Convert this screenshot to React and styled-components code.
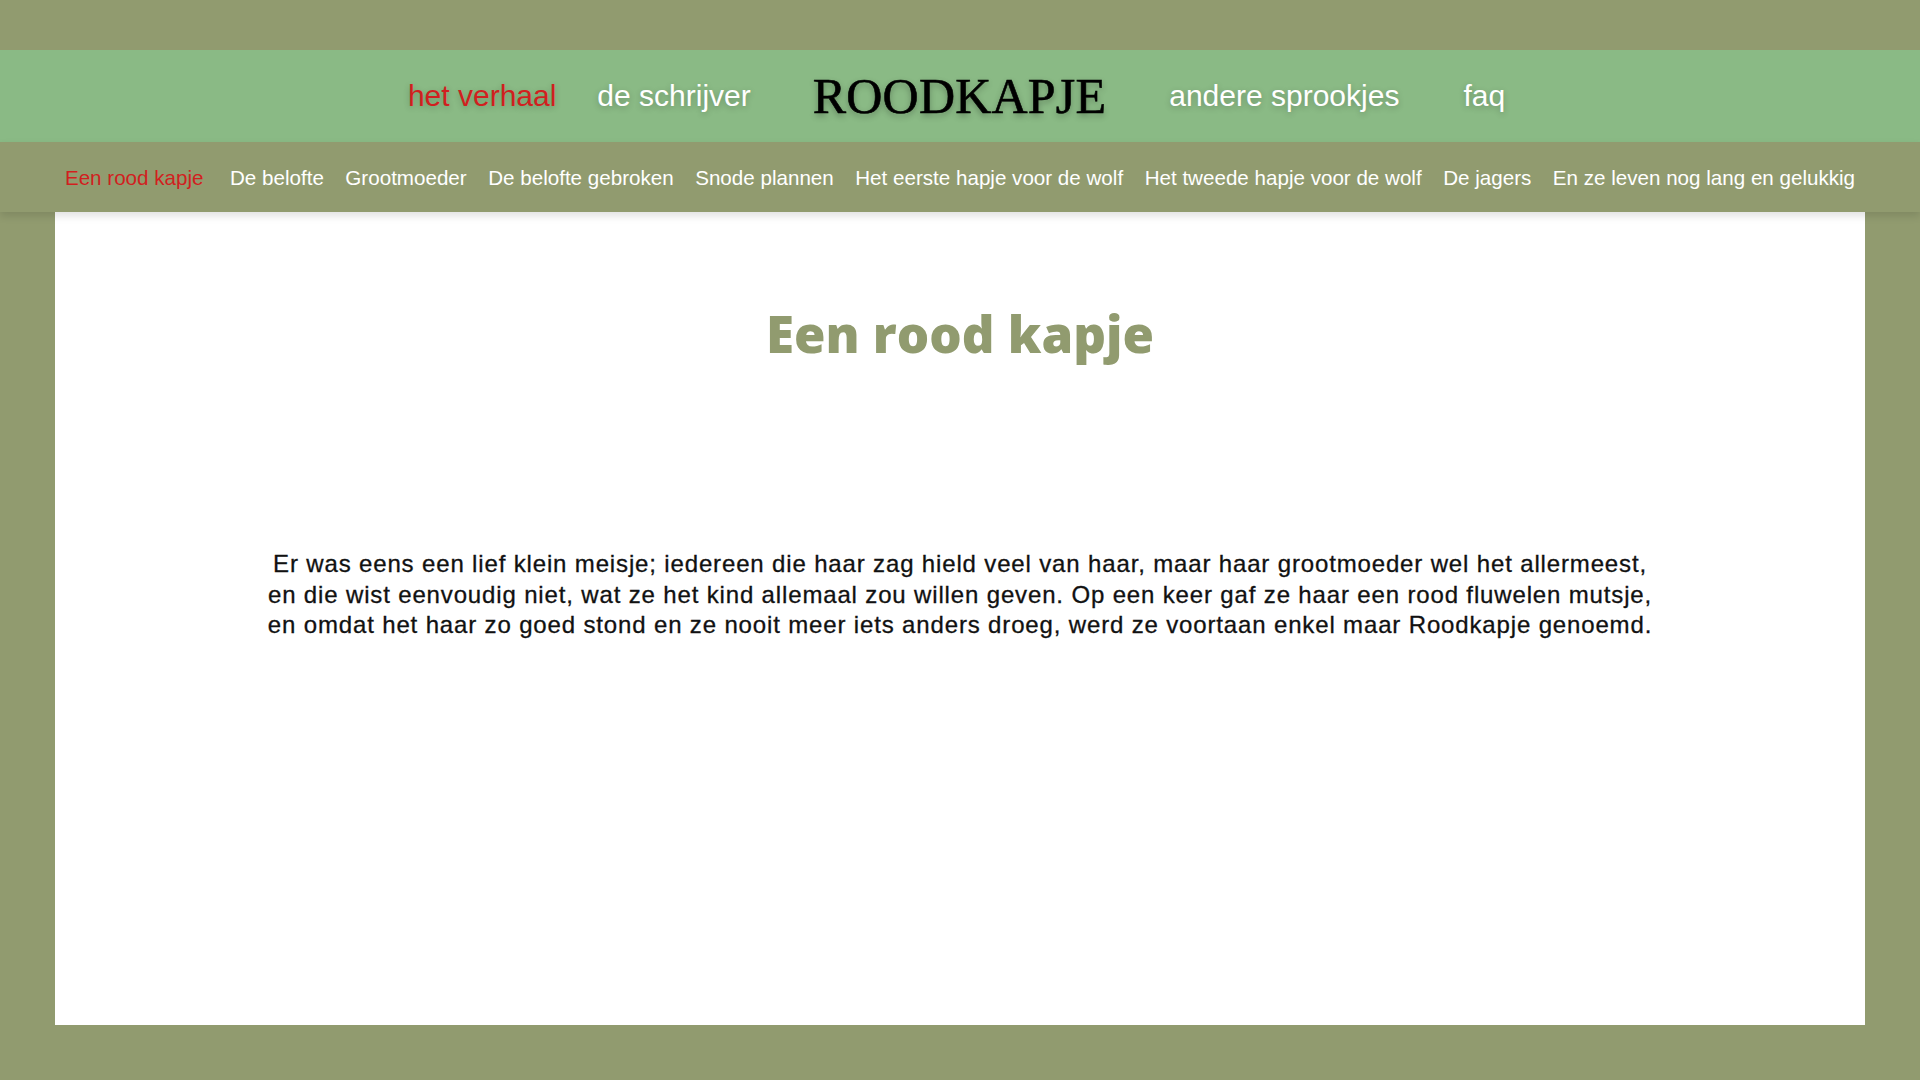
import React from 'react'
import styled, { createGlobalStyle } from 'styled-components'

const olive = '#919b6f'
const green = '#8aba85'
const red = '#d11f1f'

const GlobalStyle = createGlobalStyle`
  html, body {
    margin: 0;
    padding: 0;
    background: ${olive};
    font-family: "Liberation Sans", Arial, sans-serif;
  }
`

const Page = styled.div`
  width: 1920px;
  height: 1080px;
  padding-top: 50px;
  box-sizing: border-box;
  display: flex;
  flex-direction: column;
  background: ${olive};
  overflow: hidden;
`

const Header = styled.header`
  height: 92px;
  background: ${green};
  display: flex;
  align-items: center;
`

const NavSide = styled.nav`
  flex: 1;
  display: flex;
  align-items: center;
  justify-content: ${({ $side }) => ($side === 'left' ? 'flex-end' : 'flex-start')};
  gap: ${({ $gap }) => $gap}px;
`

const NavLink = styled.a`
  font-size: 30px;
  color: ${({ $active }) => ($active ? red : '#ffffff')};
  text-decoration: none;
  text-shadow: 0 2px 6px rgba(0, 0, 0, 0.22);
  cursor: pointer;
  white-space: nowrap;
`

const Logo = styled.h1`
  margin: 0 63px 0 62px;
  font-family: "Liberation Serif", "DejaVu Serif", serif;
  font-weight: 400;
  font-size: 50px;
  letter-spacing: 0.2px;
  color: #000000;
  -webkit-text-stroke: 0.6px #000000;
  text-shadow: 0 3px 6px rgba(0, 0, 0, 0.3);
  line-height: 1;
`

const SubNav = styled.nav`
  height: 70px;
  display: flex;
  align-items: center;
  justify-content: center;
  gap: 21.5px;
  position: relative;
  z-index: 1;
  box-shadow: 0 4px 8px rgba(0, 0, 0, 0.12);
`

const SubLink = styled.a`
  font-size: 20.6px;
  color: ${({ $active }) => ($active ? red : '#ffffff')};
  margin-right: ${({ $active }) => ($active ? 5 : 0)}px;
  padding-top: 2px;
  text-decoration: none;
  white-space: nowrap;
  cursor: pointer;
`

const Panel = styled.main`
  margin: 0 55px 55px;
  height: 813px;
  background: #ffffff;
  display: flex;
  flex-direction: column;
  align-items: center;
`

const Title = styled.h2`
  margin: 88px 0 0;
  font-family: "Open Sans", "Lato", sans-serif;
  font-weight: 800;
  font-size: 51px;
  line-height: 66px;
  color: ${olive};
`

const Story = styled.p`
  margin: 183px 0 0;
  font-size: 24px;
  letter-spacing: 0.85px;
  line-height: 30.5px;
  color: #111111;
  text-align: center;
  -webkit-text-stroke: 0.3px #111111;
`

const mainLinks = ['het verhaal', 'de schrijver']
const otherLinks = ['andere sprookjes', 'faq']

const chapters = [
  'Een rood kapje',
  'De belofte',
  'Grootmoeder',
  'De belofte gebroken',
  'Snode plannen',
  'Het eerste hapje voor de wolf',
  'Het tweede hapje voor de wolf',
  'De jagers',
  'En ze leven nog lang en gelukkig',
]

export default function App() {
  return (
    <>
      <GlobalStyle />
      <Page>
        <Header>
          <NavSide $side="left" $gap={41}>
            {mainLinks.map((l, i) => (
              <NavLink key={l} $active={i === 0}>{l}</NavLink>
            ))}
          </NavSide>
          <Logo>ROODKAPJE</Logo>
          <NavSide $side="right" $gap={64}>
            {otherLinks.map((l) => (
              <NavLink key={l}>{l}</NavLink>
            ))}
          </NavSide>
        </Header>
        <SubNav>
          {chapters.map((c, i) => (
            <SubLink key={c} $active={i === 0}>{c}</SubLink>
          ))}
        </SubNav>
        <Panel>
          <Title>Een rood kapje</Title>
          <Story>
            Er was eens een lief klein meisje; iedereen die haar zag hield veel van haar, maar haar grootmoeder wel het allermeest,
            <br />
            en die wist eenvoudig niet, wat ze het kind allemaal zou willen geven. Op een keer gaf ze haar een rood fluwelen mutsje,
            <br />
            en omdat het haar zo goed stond en ze nooit meer iets anders droeg, werd ze voortaan enkel maar Roodkapje genoemd.
          </Story>
        </Panel>
      </Page>
    </>
  )
}
